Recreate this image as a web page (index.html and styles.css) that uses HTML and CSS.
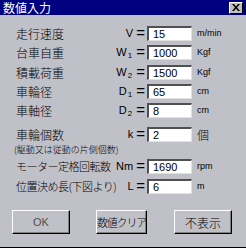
FILE: index.html
```html
<!DOCTYPE html>
<html lang="ja">
<head>
<meta charset="utf-8">
<link rel="stylesheet" href="styles.css">
</head>
<body>
<div class="win">
  <div class="title">
    <span class="title-text">数値入力</span>
    <span class="close"><svg width="8" height="7" viewBox="0 0 8 7"><path d="M0 0h2l2 2.5L6 0h2L5 3.5 8 7H6L4 4.5 2 7H0l3-3.5z" fill="#000"/></svg></span>
  </div>
  <div class="form">
    <div class="row r1"><span class="label">走行速度</span><span class="sym">V <span class="eq">=</span></span><span class="box">15</span><span class="unit">m/min</span></div>
    <div class="row r2"><span class="label">台車自重</span><span class="sym">W<sub>1</sub> <span class="eq">=</span></span><span class="box">1000</span><span class="unit">Kgf</span></div>
    <div class="row r3"><span class="label">積載荷重</span><span class="sym">W<sub>2</sub> <span class="eq">=</span></span><span class="box">1500</span><span class="unit">Kgf</span></div>
    <div class="row r4"><span class="label">車輪径</span><span class="sym">D<sub>1</sub> <span class="eq">=</span></span><span class="box">65</span><span class="unit">cm</span></div>
    <div class="row r5"><span class="label">車軸径</span><span class="sym">D<sub>2</sub> <span class="eq">=</span></span><span class="box">8</span><span class="unit">cm</span></div>
    <div class="row r6"><span class="label">車輪個数</span><span class="sym">k <span class="eq">=</span></span><span class="box">2</span><span class="unit big">個</span></div>
    <div class="note">(駆動又は従動の片側個数)</div>
    <div class="row r7"><span class="label narrow">モーター定格回転数</span><span class="sym">Nm <span class="eq">=</span></span><span class="box">1690</span><span class="unit">rpm</span></div>
    <div class="row r8"><span class="label narrow">位置決め長(下図より)</span><span class="sym">L <span class="eq">=</span></span><span class="box">6</span><span class="unit">m</span></div>
  </div>
  <div class="buttons">
    <span class="btn ok">OK</span>
    <span class="btn clear">数値クリア</span>
    <span class="btn hide">不表示</span>
  </div>
</div>
</body>
</html>
```
FILE: styles.css
```css
* { box-sizing: border-box; }
html, body { margin: 0; padding: 0; }
body {
  width: 246px;
  height: 248px;
  background: #c0c0c8;
  font-family: "Noto Sans CJK JP", "Liberation Sans", sans-serif;
  overflow: hidden;
}
.win {
  width: 246px;
  height: 248px;
  border-bottom: 1px solid #000;
  display: flex;
  flex-direction: column;
}
.title {
  height: 15px;
  background: #000080;
  display: flex;
  align-items: center;
  justify-content: space-between;
  padding: 0 3px 0 3px;
}
.title-text {
  color: #fff;
  font-size: 12px;
  line-height: 15px;
}
.close {
  width: 14px;
  height: 12px;
  background: #c0c0c0;
  border: 1px solid;
  border-color: #fff #000 #000 #fff;
  display: flex;
  align-items: center;
  justify-content: center;
}
.form {
  display: flex;
  flex-direction: column;
  padding-top: 11px;
}
.row {
  display: grid;
  grid-template-columns: 1fr auto 45px 54px;
  align-items: center;
  height: 15px;
  padding-left: 16px;
}
.r2, .r4, .r5 { margin-top: 4px; }
.r3 { margin-top: 5px; }
.r6 { margin-top: 9px; }
.r7 { margin-top: 3px; }
.r8 { margin-top: 5px; }
.label {
  font-size: 12px;
  font-weight: 300;
  color: #000;
  white-space: nowrap;
  line-height: 15px;
}
.label.narrow { font-size: 11px; letter-spacing: -0.5px; }
.sym {
  font-family: "Liberation Sans", sans-serif;
  font-size: 11px;
  color: #000;
  text-align: right;
  padding-right: 2px;
  white-space: nowrap;
  line-height: 15px;
}
.eq {
  font-size: 15px;
  line-height: 0;
  vertical-align: -1px;
}
.sym sub {
  font-size: 8px;
  vertical-align: -2px;
  line-height: 0;
  margin: 0 1px;
}
.box {
  height: 15px;
  background: #fff;
  border-style: solid;
  border-width: 2px 1px 1px 2px;
  border-color: #505050 #e0e0e0 #e0e0e0 #505050;
  font-family: "Liberation Sans", sans-serif;
  font-size: 11px;
  line-height: 12px;
  padding-left: 4px;
  color: #000;
}
.unit {
  padding-left: 5px;
  font-family: "Liberation Sans", sans-serif;
  font-size: 9px;
  color: #000;
  line-height: 15px;
}
.unit.big {
  font-family: "Noto Sans CJK JP", sans-serif;
  font-size: 12px;
  font-weight: 300;
}
.note {
  font-size: 9px;
  font-weight: 300;
  line-height: 12px;
  height: 12px;
  padding-left: 14px;
  margin-top: 2px;
  color: #000;
  white-space: nowrap;
}
.buttons {
  display: flex;
  padding-left: 12px;
  margin-top: 16px;
}
.btn {
  height: 24px;
  display: flex;
  align-items: center;
  justify-content: center;
  font-size: 12px;
  font-weight: 300;
  color: #000;
  white-space: nowrap;
  border: 1px solid;
  border-color: #fff #000 #000 #fff;
  box-shadow: inset -1px -1px #808080;
}
.ok { width: 58px; color: #505050; font-family: "Liberation Sans", sans-serif; font-size: 11px; font-weight: 400; }
.clear { width: 51px; margin-left: 26px; font-size: 11px; letter-spacing: -1.2px; }
.hide { width: 58px; margin-left: 27px; }
```
